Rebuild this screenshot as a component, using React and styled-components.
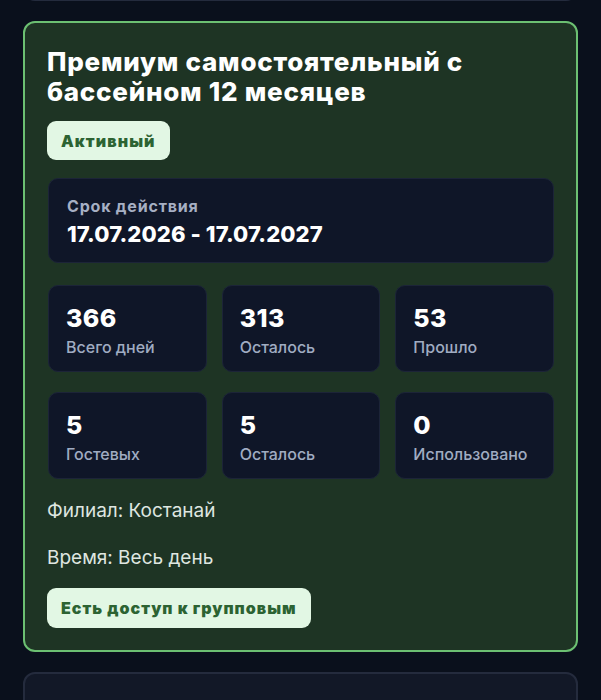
import React from "react";
import styled, { createGlobalStyle } from "styled-components";

const Global = createGlobalStyle`
  html, body { margin: 0; padding: 0; background: #0a101c; }
  body { font-family: Inter, "Noto Sans", "Liberation Sans", sans-serif; -webkit-font-smoothing: antialiased; }
`;

const Page = styled.div`
  display: flex;
  flex-direction: column;
  gap: 20px;
  padding: 0 23px 40px;
  margin-top: -60px;
`;

const Card = styled.section`
  box-sizing: border-box;
  border-radius: 12px;
  border: 2px solid ${(p) => (p.$active ? "#6cc072" : "#242b3d")};
  background: ${(p) => (p.$active ? "#1e3424" : "#121827")};
  padding: 24px 22px 22px;
  min-height: ${(p) => p.$minH || 0}px;
  display: flex;
  flex-direction: column;
`;

const Title = styled.h2`
  margin: 0;
  font-size: 26px;
  line-height: 30px;
  font-weight: 800;
  color: #ffffff;
  letter-spacing: 0.75px;
`;

const Pill = styled.div`
  align-self: flex-start;
  background: #e2f7e4;
  color: #2c6332;
  font-weight: 900;
  font-size: 16px;
  letter-spacing: ${(p) => p.$ls || 1}px;
  border-radius: 9px;
  padding: 0 14px;
  height: ${(p) => p.$h || 38}px;
  display: flex;
  align-items: center;
  margin-top: ${(p) => p.$mt || 0}px;
`;

const Panel = styled.div`
  box-sizing: border-box;
  background: #0f1628;
  border: 1px solid #1c2438;
  border-radius: 10px;
`;

const Period = styled(Panel)`
  margin-top: 18px;
  margin-left: 1px;
  height: 85px;
  padding: 16px 18px 0;
  display: flex;
  flex-direction: column;
  gap: 3px;
`;

const Label = styled.div`
  color: ${(p) => p.$color || "#a0acc2"};
  font-size: ${(p) => p.$size || 16}px;
  font-weight: ${(p) => p.$w || 500};
  letter-spacing: ${(p) => p.$ls || 0}px;
  line-height: 22px;
`;

const DateText = styled.div`
  color: #ffffff;
  font-size: 22px;
  font-weight: 800;
  letter-spacing: 0.1px;
  line-height: 28px;
`;

const Grid = styled.div`
  margin-top: 22px;
  margin-left: 1px;
  display: grid;
  grid-template-columns: repeat(3, 1fr);
  column-gap: 15px;
  row-gap: 20px;
`;

const Stat = styled(Panel)`
  height: 87px;
  padding: 17px 17px 0;
  display: flex;
  flex-direction: column;
  gap: 3px;
`;

const StatValue = styled.div`
  color: #ffffff;
  font-size: 25px;
  font-weight: 800;
  letter-spacing: 0.4px;
  line-height: 30px;
`;

const Info = styled.div`
  color: #dfe6e0;
  font-size: 19px;
  line-height: 24px;
  margin-top: ${(p) => p.$mt}px;
`;

const stats = [
  ["366", "Всего дней"],
  ["313", "Осталось"],
  ["53", "Прошло"],
  ["5", "Гостевых"],
  ["5", "Осталось"],
  ["0", "Использовано"],
];

export default function App() {
  return (
    <>
      <Global />
      <Page>
        <Card $minH={61} />
        <Card $active>
          <Title>
            Премиум самостоятельный с<br />бассейном 12 месяцев
          </Title>
          <Pill $mt={14} $h={39} $ls={1.1}>Активный</Pill>
          <Period>
            <Label $size={16} $w={700} $ls={0.8} $color="#a6afc3">Срок действия</Label>
            <DateText>17.07.2026 - 17.07.2027</DateText>
          </Period>
          <Grid>
            {stats.map(([v, l], i) => (
              <Stat key={i}>
                <StatValue>{v}</StatValue>
                <Label>{l}</Label>
              </Stat>
            ))}
          </Grid>
          <Info $mt={20}>Филиал: Костанай</Info>
          <Info $mt={23}>Время: Весь день</Info>
          <Pill $mt={18} $h={40} $ls={1}>Есть доступ к групповым</Pill>
        </Card>
        <Card $minH={120} />
      </Page>
    </>
  );
}
